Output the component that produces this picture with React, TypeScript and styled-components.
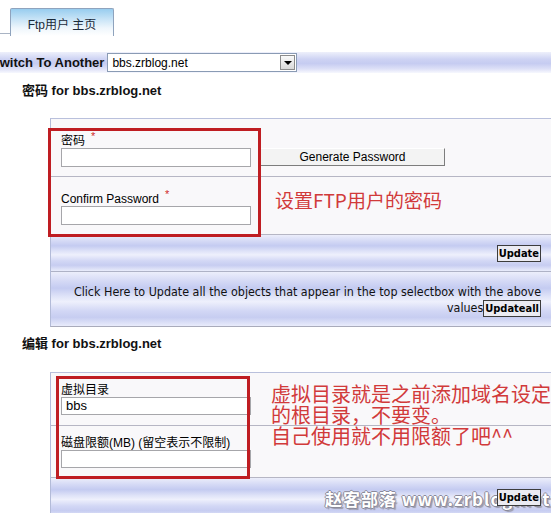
import React from 'react';
import styled, { createGlobalStyle } from 'styled-components';

const GlobalStyle = createGlobalStyle`
  html, body {
    margin: 0;
    padding: 0;
    background: #fff;
    overflow: hidden;
  }
  body {
    font-family: "Liberation Sans", Arial, "Noto Sans CJK SC", sans-serif;
    font-size: 12px;
    color: #000;
  }
`;

const band = `linear-gradient(to bottom, #eceefb 0%, #d3d8f5 18%, #c4cbf1 30%, #dfe3f8 45%, #eef0fc 55%, #d2d7f5 72%, #c7cdf1 84%, #e9ecfb 100%)`;

const Page = styled.div`
  width: 551px;
  height: 513px;
  overflow: hidden;
  position: relative;
`;

const TabStrip = styled.div`
  height: 36px;
  padding-top: 8px;
  box-sizing: border-box;
  display: flex;
  align-items: flex-end;
`;

const TabRule = styled.div`
  width: 10px;
  height: 0;
  border-bottom: 1px solid #a9b4c4;
  margin-bottom: 2px;
`;

const Tab = styled.div`
  width: 104px;
  height: 28px;
  box-sizing: border-box;
  border: 1px solid #8fa3bd;
  border-bottom: none;
  border-radius: 2px 2px 0 0;
  background: linear-gradient(to bottom, #98cdef 0%, #c4e2f6 35%, #eef6fc 70%, #fff 100%);
  text-align: center;
  padding-top: 9px;
  line-height: 14px;
  font-size: 12px;
  color: #1a2a3a;
`;

const SwitchRow = styled.div`
  margin-top: 16px;
  height: 21px;
  display: flex;
  align-items: center;
  background: linear-gradient(to bottom, #eef0fb 0%, #cdd2f3 35%, #c6ccf1 55%, #dde0f7 80%, #f7f8fe 100%);
`;

const SwitchLabel = styled.span`
  margin-left: -9px;
  font-weight: bold;
  font-size: 13px;
  white-space: nowrap;
  color: #111;
`;

const FakeSelect = styled.div`
  margin-left: 3px;
  width: 190px;
  height: 19px;
  box-sizing: border-box;
  border: 1px solid #8a9bb4;
  background: #fff;
  display: flex;
  align-items: center;
  padding-left: 4px;
  font-size: 12px;
`;

const SelectArrow = styled.div`
  margin-left: auto;
  margin-right: 1px;
  width: 15px;
  height: 15px;
  box-sizing: border-box;
  border: 1px solid #8c8c8c;
  background: linear-gradient(to bottom, #fafafa, #d9d9d9);
  display: flex;
  align-items: center;
  justify-content: center;

  &::after {
    content: '';
    border-left: 4px solid transparent;
    border-right: 4px solid transparent;
    border-top: 4px solid #000;
  }
`;

const SectionTitle = styled.div<{ $top: number; $bottom: number }>`
  margin: ${(p) => p.$top}px 0 ${(p) => p.$bottom}px 22px;
  font-weight: bold;
  font-size: 13px;
  line-height: 16px;
  color: #111;
`;

const Panel = styled.div`
  position: relative;
  margin-left: 50px;
  border-left: 1px solid #b3bbd8;
  border-top: 1px solid #b9c0dc;
  border-bottom: 1px solid #a9abbb;
`;

const FieldRow = styled.div<{ $top: number; $bottom: number }>`
  display: flex;
  align-items: flex-end;
  padding: ${(p) => p.$top}px 0 ${(p) => p.$bottom}px 10px;
  background: #f9f8fa;
  border-bottom: 1px solid #b6b6c4;
`;

const FieldGroup = styled.div`
  width: 190px;
`;

const FieldLabel = styled.div`
  font-size: 12px;
  line-height: 13px;
  white-space: nowrap;
`;

const Required = styled.span`
  color: #d02a2a;
  font-size: 11px;
  margin-left: 6px;
  position: relative;
  top: -5px;
`;

const TextInput = styled.div<{ $h: number }>`
  width: 190px;
  height: ${(p) => p.$h}px;
  box-sizing: border-box;
  border: 1px solid #a6a6aa;
  background: #fff;
  font-size: 13px;
  line-height: ${(p) => p.$h - 2}px;
  padding-left: 4px;
`;

const GenButton = styled.div`
  margin-left: 9px;
  margin-bottom: 1px;
  width: 185px;
  height: 18px;
  box-sizing: border-box;
  background: #f3f3f3;
  border: 1px solid;
  border-color: #fff #7d7d7d #7d7d7d #e2e2e2;
  text-align: center;
  font-size: 12px;
  line-height: 16px;
`;

const BandRow = styled.div<{ $h: number }>`
  position: relative;
  height: ${(p) => p.$h}px;
  box-sizing: border-box;
  background: ${band};
  border-bottom: 1px solid #aeb2c6;
  display: flex;
  justify-content: flex-end;
  align-items: center;
  padding-right: 10px;
`;

const NoteRow = styled.div`
  height: 54px;
  box-sizing: border-box;
  background: ${band};
  padding: 12px 10px 0 0;
  text-align: right;
  font-family: "DejaVu Sans Condensed", "Liberation Sans", sans-serif;
  font-size: 12.4px;
  line-height: 16px;
  color: #111;
  white-space: nowrap;
`;

const SubmitButton = styled.span`
  position: relative;
  z-index: 1;
  display: inline-block;
  vertical-align: middle;
  height: 17px;
  box-sizing: border-box;
  padding: 0 1px;
  border: 1px solid #3c3c3c;
  background: #ebebf2;
  font-family: "DejaVu Sans Condensed", "Liberation Sans", sans-serif;
  font-weight: bold;
  font-size: 11px;
  line-height: 15px;
  color: #000;
`;

const RedBox = styled.div<{ $l: number; $t: number; $w: number; $h: number }>`
  position: absolute;
  left: ${(p) => p.$l}px;
  top: ${(p) => p.$t}px;
  width: ${(p) => p.$w}px;
  height: ${(p) => p.$h}px;
  box-sizing: border-box;
  border: 3px solid #bf1d22;
  pointer-events: none;
`;

const RedNote = styled.div<{ $l: number; $t: number; $size: number; $lh: number }>`
  position: absolute;
  left: ${(p) => p.$l}px;
  top: ${(p) => p.$t}px;
  font-family: "Noto Sans CJK SC", sans-serif;
  font-size: ${(p) => p.$size}px;
  line-height: ${(p) => p.$lh}px;
  color: #d13a3a;
  white-space: nowrap;
`;

const Watermark = styled.div`
  position: absolute;
  left: 274px;
  top: 8px;
  font-family: "Noto Sans CJK SC", sans-serif;
  font-weight: bold;
  font-size: 17px;
  letter-spacing: 1px;
  color: #fff;
  white-space: nowrap;
  text-shadow: 1px 0 0 #8a8a9a, -1px 0 0 #8a8a9a, 0 1px 0 #8a8a9a, 0 -1px 0 #8a8a9a, 2px 2px 1px #9a9aaa;
`;

export default function App() {
  return (
    <Page>
      <GlobalStyle />
      <TabStrip>
        <TabRule />
        <Tab>Ftp用户 主页</Tab>
      </TabStrip>

      <SwitchRow>
        <SwitchLabel>Switch To Another</SwitchLabel>
        <FakeSelect>
          bbs.zrblog.net
          <SelectArrow />
        </FakeSelect>
      </SwitchRow>

      <SectionTitle $top={10} $bottom={19}>密码 for bbs.zrblog.net</SectionTitle>

      <Panel>
        <FieldRow $top={16} $bottom={9}>
          <FieldGroup>
            <FieldLabel>
              密码<Required>*</Required>
            </FieldLabel>
            <TextInput $h={19} />
          </FieldGroup>
          <GenButton>Generate Password</GenButton>
        </FieldRow>
        <FieldRow $top={16} $bottom={9}>
          <FieldGroup>
            <FieldLabel>
              Confirm Password<Required>*</Required>
            </FieldLabel>
            <TextInput $h={19} />
          </FieldGroup>
        </FieldRow>
        <BandRow $h={37}>
          <SubmitButton>Update</SubmitButton>
        </BandRow>
        <NoteRow>
          Click Here to Update all the objects that appear in the top selectbox with the above
          <br />
          values<SubmitButton>Updateall</SubmitButton>
        </NoteRow>

        <RedBox $l={-3} $t={9} $w={213} $h={109} />
        <RedNote $l={224} $t={70} $size={19} $lh={22}>
          设置FTP用户的密码
        </RedNote>
      </Panel>

      <SectionTitle $top={9} $bottom={20}>编辑 for bbs.zrblog.net</SectionTitle>

      <Panel>
        <FieldRow $top={11} $bottom={10}>
          <FieldGroup>
            <FieldLabel>虚拟目录</FieldLabel>
            <TextInput $h={18}>bbs</TextInput>
          </FieldGroup>
        </FieldRow>
        <FieldRow $top={11} $bottom={9}>
          <FieldGroup>
            <FieldLabel>磁盘限额(MB) (留空表示不限制)</FieldLabel>
            <TextInput $h={18} />
          </FieldGroup>
        </FieldRow>
        <BandRow $h={40}>
          <Watermark>赵客部落 www.zrblog.net</Watermark>
          <SubmitButton>Update</SubmitButton>
        </BandRow>

        <RedBox $l={5} $t={3} $w={194} $h={103} />
        <RedNote $l={220} $t={10} $size={20} $lh={21}>
          虚拟目录就是之前添加域名设定
          <br />
          的根目录，不要变。
          <br />
          自己使用就不用限额了吧^^
        </RedNote>
      </Panel>
    </Page>
  );
}
